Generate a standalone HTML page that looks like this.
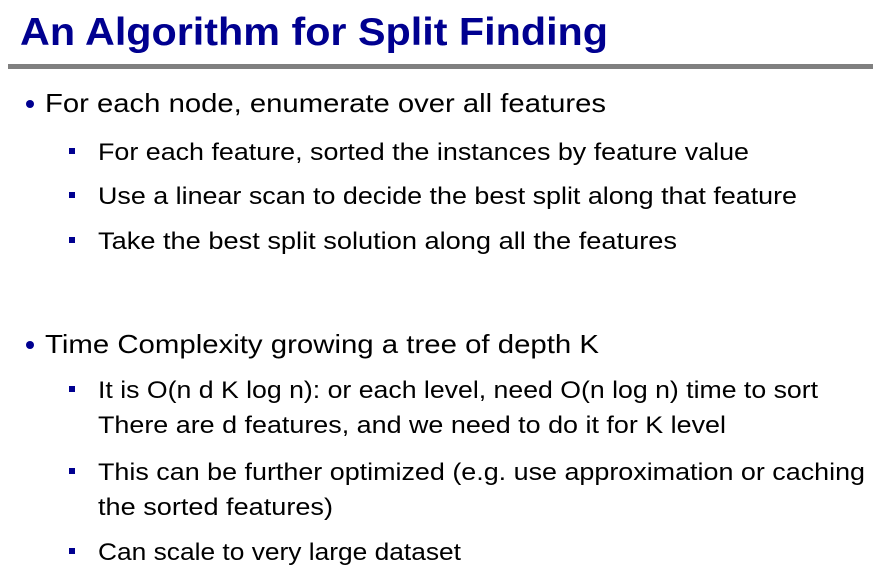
<!DOCTYPE html>
<html><head><meta charset="utf-8"><style>
html,body{margin:0;padding:0;background:#fff;width:882px;height:575px;overflow:hidden}
svg{display:block}
text{font-family:"Liberation Sans",sans-serif;fill:#000;font-size:26px}
.t{fill:#000090;font-weight:bold;font-size:39px}
.s{font-size:24px}
</style></head><body>
<svg width="882" height="575" viewBox="0 0 882 575">
<text class="t" x="20" y="45" textLength="588" lengthAdjust="spacingAndGlyphs">An Algorithm for Split Finding</text>
<rect x="8" y="64" width="865" height="5" fill="#808080"/>
<circle cx="30" cy="104" r="4" fill="#000090"/>
<text x="45" y="112" textLength="561" lengthAdjust="spacingAndGlyphs">For each node, enumerate over all features</text>
<rect x="69" y="148" width="6" height="6" fill="#000090"/>
<text class="s" x="98" y="160" textLength="651" lengthAdjust="spacingAndGlyphs">For each feature, sorted the instances by feature value</text>
<rect x="69" y="192" width="6" height="6" fill="#000090"/>
<text class="s" x="98" y="204" textLength="699" lengthAdjust="spacingAndGlyphs">Use a linear scan to decide the best split along that feature</text>
<rect x="69" y="237" width="6" height="6" fill="#000090"/>
<text class="s" x="98" y="249" textLength="579" lengthAdjust="spacingAndGlyphs">Take the best split solution along all the features</text>
<circle cx="30" cy="345" r="4" fill="#000090"/>
<text x="45" y="353" textLength="554" lengthAdjust="spacingAndGlyphs">Time Complexity growing a tree of depth K</text>
<rect x="69" y="386" width="6" height="6" fill="#000090"/>
<text class="s" x="98" y="398" textLength="720" lengthAdjust="spacingAndGlyphs">It is O(n d K log n): or each level, need O(n log n) time to sort</text>
<text class="s" x="98" y="433" textLength="628" lengthAdjust="spacingAndGlyphs">There are d features, and we need to do it for K level</text>
<rect x="69" y="468" width="6" height="6" fill="#000090"/>
<text class="s" x="98" y="480" textLength="767" lengthAdjust="spacingAndGlyphs">This can be further optimized (e.g. use approximation or caching</text>
<text class="s" x="98" y="515" textLength="235" lengthAdjust="spacingAndGlyphs">the sorted features)</text>
<rect x="69" y="548" width="6" height="6" fill="#000090"/>
<text class="s" x="98" y="560" textLength="363" lengthAdjust="spacingAndGlyphs">Can scale to very large dataset</text>
</svg>
</body></html>
